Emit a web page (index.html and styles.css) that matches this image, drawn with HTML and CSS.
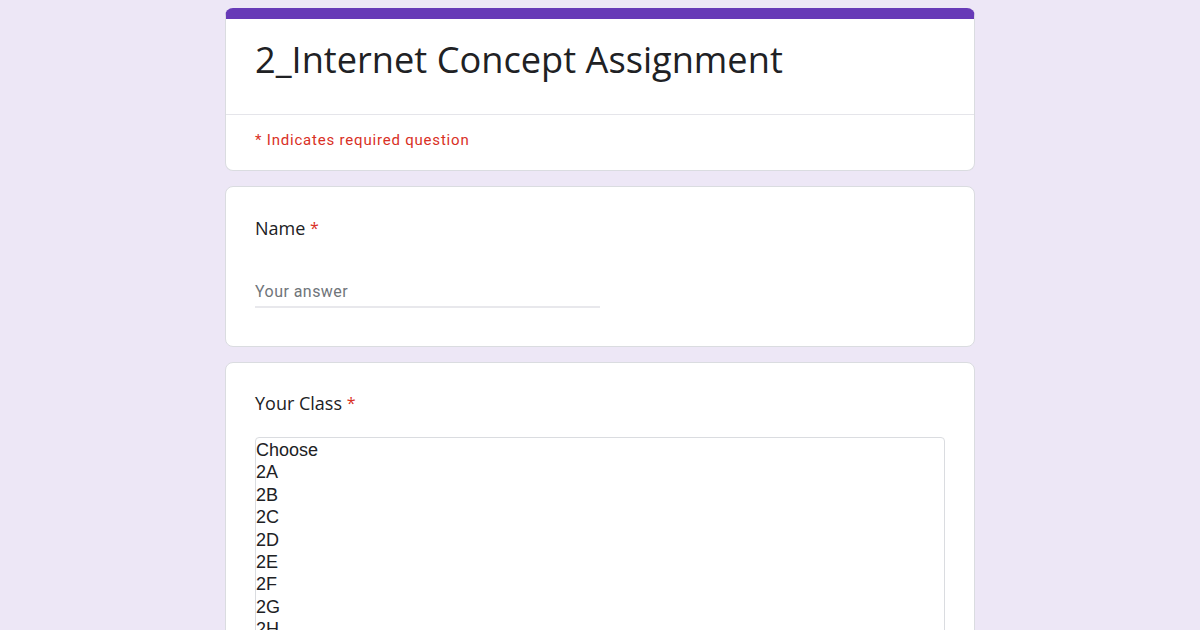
FILE: index.html
```html
<!DOCTYPE html>
<html>
<head>
<meta charset="utf-8">
<link rel="stylesheet" href="styles.css">
</head>
<body>
<div class="page">
  <div class="card header-card">
    <div class="title-wrap">
      <h1 class="title">2_Internet Concept Assignment</h1>
    </div>
    <div class="divider"></div>
    <div class="required-note">* Indicates required question</div>
  </div>

  <div class="card question-card">
    <div class="q-label">Name <span class="star">*</span></div>
    <div class="answer">Your answer</div>
  </div>

  <div class="card question-card class-card">
    <div class="q-label">Your Class <span class="star">*</span></div>
    <div class="listbox">
      <div class="opt">Choose</div>
      <div class="opt">2A</div>
      <div class="opt">2B</div>
      <div class="opt">2C</div>
      <div class="opt">2D</div>
      <div class="opt">2E</div>
      <div class="opt">2F</div>
      <div class="opt">2G</div>
      <div class="opt">2H</div>
    </div>
  </div>
</div>
</body>
</html>
```

FILE: styles.css
```css
html, body {
  margin: 0;
  padding: 0;
  height: 630px;
  overflow: hidden;
  background: #ede7f6;
}
.page {
  width: 750px;
  margin: 0 auto;
  padding-top: 8px;
  display: flex;
  flex-direction: column;
  gap: 15px;
}
.card {
  background: #fff;
  border: 1px solid #dadce0;
  border-radius: 8px;
  box-sizing: border-box;
}
.header-card {
  border-top: 11px solid #673ab7;
  height: 163px;
}
.title-wrap {
  padding: 19px 29px 0;
  height: 95px;
  box-sizing: border-box;
}
.title {
  margin: 0;
  font-family: "Open Sans", sans-serif;
  font-weight: 400;
  font-size: 36.2px;
  line-height: 42px;
  color: #202124;
}
.divider {
  height: 1px;
  background: #e5e5ea;
}
.required-note {
  padding: 15px 29px 0;
  font-family: Roboto, sans-serif;
  font-size: 15px;
  line-height: 20px;
  color: #d93025;
  letter-spacing: 0.8px;
}
.question-card {
  padding: 28px 29px 0;
  height: 161px;
}
.q-label {
  font-family: "Open Sans", sans-serif;
  font-size: 18px;
  line-height: 26px;
  color: #202124;
}
.star {
  color: #d93025;
  font-size: 16px;
  vertical-align: 1px;
}
.answer {
  margin-top: 39px;
  width: 345px;
  font-family: Roboto, sans-serif;
  font-size: 16px;
  line-height: 24px;
  color: #70757a;
  letter-spacing: 0.45px;
  padding-bottom: 2px;
  border-bottom: 2px solid #e8e8ec;
}
.class-card {
  height: 300px;
  padding-top: 27px;
}
.listbox {
  margin-top: 21px;
  padding-top: 1px;
  border: 1px solid #dadce0;
  border-radius: 4px;
  height: 260px;
  overflow: hidden;
}
.opt {
  font-family: "Liberation Sans", Arial, sans-serif;
  font-size: 18px;
  line-height: 22.4px;
  color: #202124;
}
```
